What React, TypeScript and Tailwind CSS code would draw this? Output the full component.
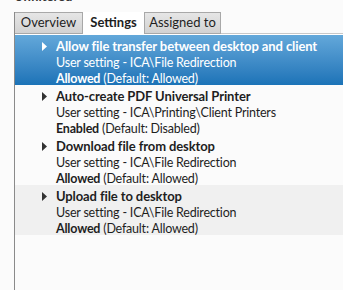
import React from 'react'

type Setting = {
  name: string
  path: string
  state: string
  def: string
}

const settings: Setting[] = [
  { name: 'Allow file transfer between desktop and client', path: 'User setting - ICA\\File Redirection', state: 'Allowed', def: '(Default: Allowed)' },
  { name: 'Auto-create PDF Universal Printer', path: 'User setting - ICA\\Printing\\Client Printers', state: 'Enabled', def: '(Default: Disabled)' },
  { name: 'Download file from desktop', path: 'User setting - ICA\\File Redirection', state: 'Allowed', def: '(Default: Allowed)' },
  { name: 'Upload file to desktop', path: 'User setting - ICA\\File Redirection', state: 'Allowed', def: '(Default: Allowed)' },
]

function Arrow({ light }: { light: boolean }) {
  return (
    <svg width="5" height="9" viewBox="0 0 5 9" className="mt-[4px] shrink-0">
      <path d="M0 0 L5 4.5 L0 9 Z" fill={light ? '#ffffff' : '#333333'} />
    </svg>
  )
}

function Row({ s, selected, hover }: { s: Setting; selected?: boolean; hover?: boolean }) {
  const bg = selected
    ? 'bg-gradient-to-b from-[#63a8da] to-[#1b73b7] text-white'
    : hover
    ? 'bg-[#f0f0f0] text-[#1e1e1e]'
    : 'text-[#1e1e1e]'
  return (
    <div className={`flex h-[50px] gap-[9px] pl-[27px] pt-[3px] ${bg}`}>
      <Arrow light={!!selected} />
      <div className="flex flex-col whitespace-nowrap text-[12.5px] leading-[16.5px] tracking-[-0.2px]">
        <div className="text-[13px] font-bold tracking-[-0.1px]">{s.name}</div>
        <div>{s.path}</div>
        <div>
          <span className="font-bold">{s.state}</span> {s.def}
        </div>
      </div>
    </div>
  )
}

export default function App() {
  return (
    <div className="h-[290px] w-[343px] overflow-hidden bg-[#fbfbfb]" style={{ fontFamily: 'Lato, "Noto Sans", sans-serif' }}>
      <div className="h-[12px] overflow-hidden pl-[14px]">
        <div className="-mt-[12px] text-[13px] font-bold leading-[16px] text-[#333]">Unfiltered</div>
      </div>
      <div className="ml-[14px] h-[278px] border-l border-[#8a8a8a]">
        <div className="flex h-[22px] text-[13px] text-[#1e1e1e]">
          <div className="flex w-[68px] items-center justify-center border border-l-0 border-[#a8a8a8] bg-gradient-to-b from-[#e6e6e6] to-[#d2d2d2]">Overview</div>
          <div className="flex w-[61px] items-center justify-center bg-white font-bold">Settings</div>
          <div className="flex w-[77px] items-center justify-center border border-[#a8a8a8] bg-gradient-to-b from-[#e6e6e6] to-[#d2d2d2]">Assigned to</div>
          <div className="flex-1 border-b border-[#c8c8c8]"></div>
        </div>
        <div className="h-[1px] bg-white"></div>
        <div className="flex flex-col">
          {settings.map((s, i) => (
            <Row key={s.name} s={s} selected={i === 0} hover={i === 3} />
          ))}
        </div>
      </div>
    </div>
  )
}
